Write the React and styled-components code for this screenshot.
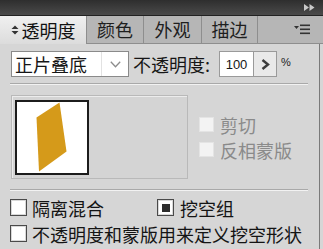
import styled, { createGlobalStyle } from "styled-components";

const GlobalStyle = createGlobalStyle`
  html, body {
    margin: 0;
    padding: 0;
    background: #d6d6d6;
  }
`;

const Panel = styled.div`
  width: 323px;
  height: 249px;
  display: flex;
  flex-direction: column;
  background: #d6d6d6;
  font-family: "Noto Sans CJK SC", "Microsoft YaHei", sans-serif;
  color: #161616;
  overflow: hidden;
`;

const TitleBar = styled.div`
  height: 15px;
  display: flex;
  align-items: center;
  justify-content: flex-end;
  padding-right: 8px;
  background: linear-gradient(#2e2e2e, #4a4a4a);
  flex-shrink: 0;
`;

const TabStrip = styled.div`
  height: 28px;
  display: flex;
  background: #b6b6b6;
  border-top: 1px solid #222;
  flex-shrink: 0;
`;

const Tab = styled.div`
  width: ${(p) => p.$w}px;
  display: flex;
  align-items: center;
  justify-content: center;
  gap: 3px;
  font-size: 18px;
  line-height: 1;
  box-sizing: border-box;
  border-right: 1px solid #8e8e8e;
  border-bottom: ${(p) => (p.$active ? "none" : "1px solid #8e8e8e")};
  background: ${(p) => (p.$active ? "linear-gradient(#f0f0f0, #dcdcdc)" : "#b6b6b6")};
  color: ${(p) => (p.$active ? "#111" : "#1e1e1e")};
  padding-bottom: 1px;
`;

const TabFill = styled.div`
  flex: 1;
  display: flex;
  align-items: center;
  justify-content: flex-end;
  padding-right: 13px;
  border-bottom: 1px solid #8e8e8e;
`;

const Body = styled.div`
  flex: 1;
  width: 320px;
  box-sizing: border-box;
  border-right: 1px solid #7a7a7a;
  display: flex;
  flex-direction: column;
  padding: 7px 0 0 10px;
`;

const ControlRow = styled.div`
  height: 26px;
  display: flex;
  align-items: center;
  margin-left: 1px;
`;

const Select = styled.div`
  width: 118px;
  height: 26px;
  box-sizing: border-box;
  border: 1px solid #8a8a8a;
  background: #fff;
  display: flex;
`;

const SelectText = styled.div`
  width: 90px;
  border-right: 1px solid #e2e2e2;
  font-size: 18px;
  line-height: 24px;
  padding-left: 3px;
  box-sizing: border-box;
`;

const SelectArrow = styled.div`
  flex: 1;
  display: flex;
  align-items: center;
  justify-content: center;
`;

const Label = styled.span`
  font-size: 18px;
  line-height: 1;
  margin-left: 4px;
  white-space: nowrap;
`;

const NumberBox = styled.div`
  width: 34px;
  height: 26px;
  box-sizing: border-box;
  margin-left: 9px;
  border: 1px solid #9a9a9a;
  border-right: none;
  background: #fff;
  font-family: "Liberation Sans", Arial, sans-serif;
  font-size: 13px;
  display: flex;
  align-items: center;
  justify-content: center;
`;

const StepButton = styled.div`
  width: 24px;
  height: 26px;
  box-sizing: border-box;
  border: 1px solid #9a9a9a;
  background: #e9e9e9;
  display: flex;
  align-items: center;
  justify-content: center;
`;

const Percent = styled.span`
  font-family: "Liberation Sans", Arial, sans-serif;
  font-size: 11px;
  margin-left: 4px;
  margin-bottom: 4px;
  color: #222;
`;

const Separator = styled.div`
  width: 298px;
  height: 1px;
  background: #a9a9a9;
  border-bottom: 1px solid #f2f2f2;
  margin-top: ${(p) => p.$top}px;
`;

const PreviewRow = styled.div`
  display: flex;
  margin-top: 10px;
  height: 84px;
`;

const PreviewBox = styled.div`
  width: 177px;
  height: 84px;
  box-sizing: border-box;
  margin-left: 1px;
  border: 1px solid #b9b9b9;
  box-shadow: inset 1px 1px 0 #ececec;
  background: #d4d4d4;
  padding: 4px 0 0 3px;
`;

const Thumb = styled.div`
  width: 74px;
  height: 75px;
  box-sizing: border-box;
  border: 2px solid #1c1c1c;
  background: #fff;
`;

const Options = styled.div`
  display: flex;
  flex-direction: column;
  gap: 8px;
  margin-left: 11px;
  padding-top: 21px;
`;

const OptionRow = styled.div`
  height: 17px;
  display: flex;
  align-items: center;
  gap: ${(p) => p.$gap || 6}px;
  font-size: 18px;
  line-height: 1;
  color: ${(p) => (p.$disabled ? "#8a8a8a" : "#141414")};
  white-space: nowrap;
`;

const Box = styled.div`
  width: ${(p) => (p.$disabled ? 15 : 17)}px;
  height: ${(p) => (p.$disabled ? 15 : 17)}px;
  box-sizing: border-box;
  flex-shrink: 0;
  border: 1px solid ${(p) => (p.$disabled ? "#e4e4e4" : "#4a4a4a")};
  background: ${(p) => (p.$disabled ? "#f3f3f3" : "#fff")};
  box-shadow: ${(p) => (p.$disabled ? "none" : "inset 0 0 0 1px #d8d8d8")};
  display: flex;
  align-items: center;
  justify-content: center;
`;

const Mark = styled.div`
  width: 8px;
  height: 8px;
  background: #2c2c2c;
`;

const BottomRows = styled.div`
  display: flex;
  flex-direction: column;
  gap: 9px;
  margin-top: 8px;
`;

const BottomRow = styled.div`
  display: flex;
  align-items: center;
`;

const Cell = styled.div`
  width: ${(p) => p.$w}px;
`;

const FastForward = () => (
  <svg width="11" height="7" viewBox="0 0 11 7">
    <path d="M0 0 L5 3.5 L0 7 Z M5.5 0 L10.5 3.5 L5.5 7 Z" fill="#c9c9c9" />
  </svg>
);

const SortIcon = () => (
  <svg width="8" height="10" viewBox="0 0 8 10">
    <path d="M4 0.5 L7.5 4 L0.5 4 Z M0.5 6 L7.5 6 L4 9.5 Z" fill="#333" />
  </svg>
);

const MenuIcon = () => (
  <svg width="16" height="11" viewBox="0 0 16 11">
    <path d="M0 2 L5 2 L2.5 5 Z" fill="#333" />
    <rect x="6" y="0.5" width="10" height="1.6" fill="#333" />
    <rect x="6" y="4.5" width="10" height="1.6" fill="#333" />
    <rect x="6" y="8.5" width="10" height="1.6" fill="#333" />
  </svg>
);

const Chevron = () => (
  <svg width="11" height="7" viewBox="0 0 11 7">
    <path d="M0.8 0.8 L5.5 5.8 L10.2 0.8" fill="none" stroke="#8c8c8c" strokeWidth="1.3" />
  </svg>
);

const RightArrow = () => (
  <svg width="9" height="11" viewBox="0 0 9 11">
    <path d="M1.5 1 L7 5.5 L1.5 10" fill="none" stroke="#3c3c3c" strokeWidth="2.4" />
  </svg>
);

const Shape = () => (
  <svg width="70" height="71" viewBox="0 0 70 71" style={{ display: "block" }}>
    <path d="M19.5 15.5 L42.5 0.5 L49.5 49.5 L22 69.5 Z" fill="#d59a1a" />
  </svg>
);

const tabs = [
  { label: "颜色", w: 57 },
  { label: "外观", w: 58 },
  { label: "描边", w: 56 },
];

export default function App() {
  return (
    <>
      <GlobalStyle />
      <Panel>
        <TitleBar>
          <FastForward />
        </TitleBar>
        <TabStrip>
          <Tab $w={87} $active>
            <SortIcon />
            透明度
          </Tab>
          {tabs.map((t) => (
            <Tab key={t.label} $w={t.w}>
              {t.label}
            </Tab>
          ))}
          <TabFill>
            <MenuIcon />
          </TabFill>
        </TabStrip>
        <Body>
          <ControlRow>
            <Select>
              <SelectText>正片叠底</SelectText>
              <SelectArrow>
                <Chevron />
              </SelectArrow>
            </Select>
            <Label>不透明度:</Label>
            <NumberBox>100</NumberBox>
            <StepButton>
              <RightArrow />
            </StepButton>
            <Percent>%</Percent>
          </ControlRow>
          <Separator $top={6} />
          <PreviewRow>
            <PreviewBox>
              <Thumb>
                <Shape />
              </Thumb>
            </PreviewBox>
            <Options>
              <OptionRow $disabled>
                <Box $disabled />
                剪切
              </OptionRow>
              <OptionRow $disabled>
                <Box $disabled />
                反相蒙版
              </OptionRow>
            </Options>
          </PreviewRow>
          <Separator $top={10} />
          <BottomRows>
            <BottomRow>
              <Cell $w={147}>
                <OptionRow $gap={5}>
                  <Box />
                  隔离混合
                </OptionRow>
              </Cell>
              <OptionRow $gap={6}>
                <Box>
                  <Mark />
                </Box>
                挖空组
              </OptionRow>
            </BottomRow>
            <BottomRow>
              <OptionRow $gap={5}>
                <Box />
                不透明度和蒙版用来定义挖空形状
              </OptionRow>
            </BottomRow>
          </BottomRows>
        </Body>
      </Panel>
    </>
  );
}
